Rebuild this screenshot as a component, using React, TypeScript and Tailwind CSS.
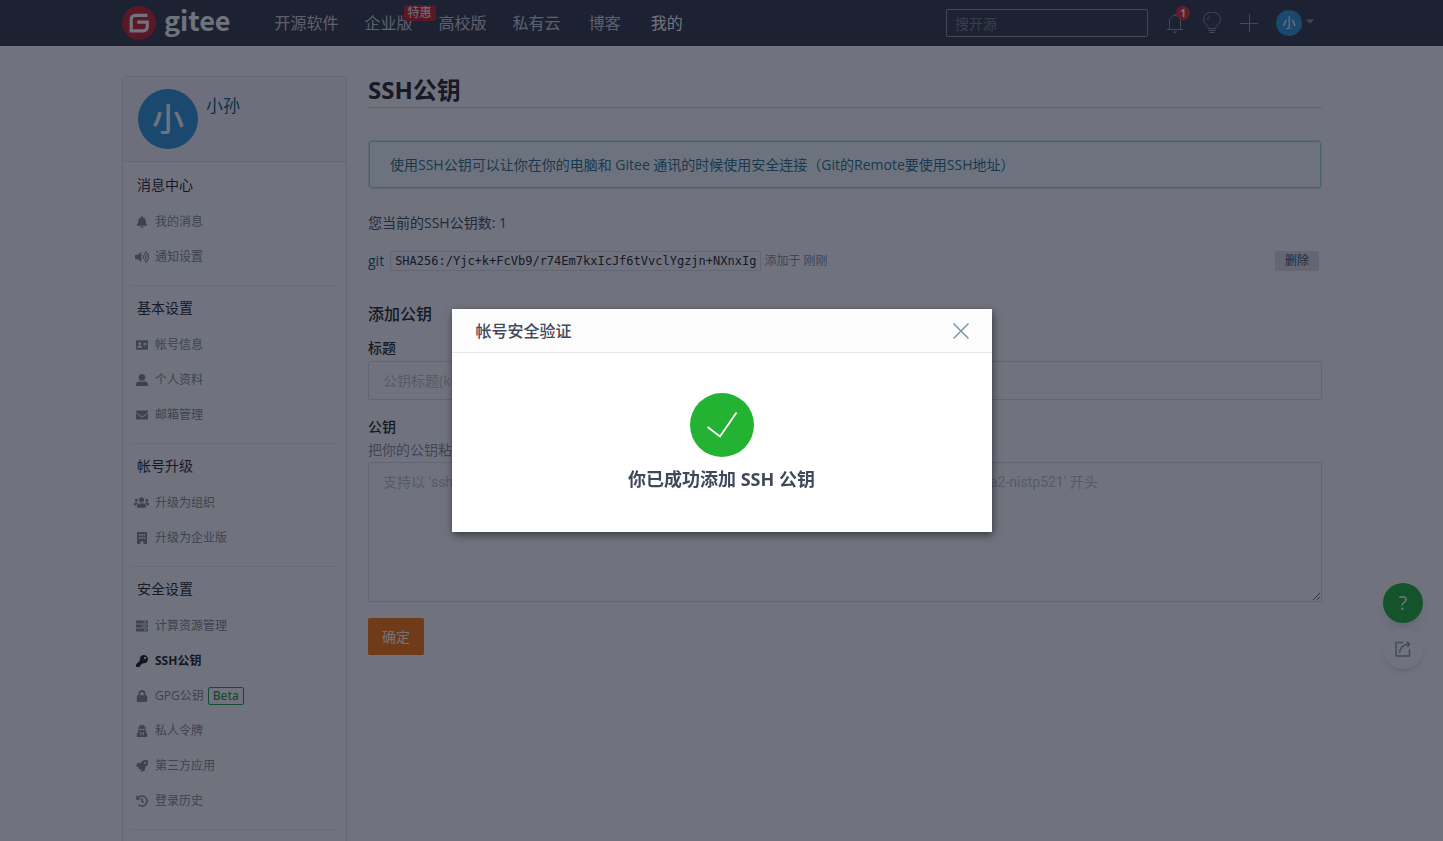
import React from 'react';
import {
    FaBell, FaVolumeUp, FaAddressCard, FaUserAlt, FaEnvelope, FaUsers,
    FaKey, FaLock, FaUserSecret, FaRocket, FaHistory, FaCaretDown,
} from 'react-icons/fa';

interface MenuItem {
    label: string;
    icon: React.ReactNode;
    active?: boolean;
    badge?: string;
}

interface MenuSection {
    title: string;
    items: MenuItem[];
}

const BuildingIcon = () => (
    <svg width="10" height="12" viewBox="0 0 10 12" fill="currentColor" fillRule="evenodd">
        <path d="M0 0h10v12H6.500V9.500h-3V12H0zM2 2v1.800h1.500V2zM4.300 2v1.800h1.500V2zM6.600 2v1.800h1.500V2zM2 5v1.800h1.500V5zM4.300 5v1.800h1.500V5zM6.600 5v1.800h1.500V5z" />
    </svg>
);

const ServerIcon = () => (
    <svg width="12" height="12" viewBox="0 0 12 12" fill="currentColor" fillRule="evenodd">
        <path d="M0 .5h12v3H0zM7.500 1.500v1h3v-1zM0 4.500h12v3H0zM6 5.500v1h4.500v-1zM0 8.500h12v3H0zM8 9.500v1h2.500v-1z" />
    </svg>
);

const sections: MenuSection[] = [
    {
        title: '消息中心',
        items: [
            { label: '我的消息', icon: <FaBell size={12} /> },
            { label: '通知设置', icon: <FaVolumeUp size={14} /> },
        ],
    },
    {
        title: '基本设置',
        items: [
            { label: '帐号信息', icon: <FaAddressCard size={12} /> },
            { label: '个人资料', icon: <FaUserAlt size={12} /> },
            { label: '邮箱管理', icon: <FaEnvelope size={12} /> },
        ],
    },
    {
        title: '帐号升级',
        items: [
            { label: '升级为组织', icon: <FaUsers size={15} /> },
            { label: '升级为企业版', icon: <BuildingIcon /> },
        ],
    },
    {
        title: '安全设置',
        items: [
            { label: '计算资源管理', icon: <ServerIcon /> },
            { label: 'SSH公钥', icon: <FaKey size={12} />, active: true },
            { label: 'GPG公钥', icon: <FaLock size={12} />, badge: 'Beta' },
            { label: '私人令牌', icon: <FaUserSecret size={12} /> },
            { label: '第三方应用', icon: <FaRocket size={12} /> },
            { label: '登录历史', icon: <FaHistory size={12} /> },
        ],
    },
];

const Logo = () => (
    <a href="#" className="flex h-full items-center gap-2 text-white">
        <svg width="34" height="34" viewBox="0 0 34 34">
            <circle cx="17" cy="17" r="17" fill="#c71d23" />
            <path
                d="M25.500 9.300H13.200a4 4 0 0 0-4 4v11.500h12.100a4 4 0 0 0 4-4v-4.700H15.300"
                fill="none"
                stroke="#fff"
                strokeWidth="3.200"
            />
        </svg>
        <span className="h-full font-['Noto_Sans_CJK_SC',sans-serif] text-[27px] leading-10 font-bold">gitee</span>
    </a>
);

const Header = () => (
    <header className="h-[46px] shrink-0 bg-[#303643]">
        <div className="mx-auto flex h-full max-w-[1201px] items-center pl-px">
            <Logo />
            <nav className="ml-11 flex items-center gap-[26px] text-base text-[#cdd0d6]">
                <a href="#">开源软件</a>
                <a href="#" className="relative">
                    企业版
                    <span className="absolute -top-1.5 left-[39px] z-10 rounded-xs bg-[#c71d23] px-1 text-xs leading-4 whitespace-nowrap text-white">特惠</span>
                </a>
                <a href="#">高校版</a>
                <a href="#">私有云</a>
                <a href="#" className="px-0.5">博客</a>
                <a href="#" className="px-0.5 text-white">我的</a>
            </nav>
            <div className="ml-auto flex items-center text-[#8c92a4]">
                <input
                    type="text"
                    aria-label="搜开源"
                    placeholder="搜开源"
                    className="h-7 w-[202px] rounded-xs border border-[#8c92a4] bg-transparent px-2 text-sm text-white outline-none placeholder:text-[#767b88]"
                />
                <button aria-label="通知" className="relative ml-[18px]">
                    <svg width="18" height="22" viewBox="0 0 18 22" fill="none" stroke="currentColor">
                        <path d="M1 17.500h16M3.500 17.500V9a5.500 5.500 0 0 1 11 0v8.500M8 3.500a1 1 0 0 1 2 0" />
                        <path d="M6.500 19.500h5L9 21.500z" fill="currentColor" stroke="none" />
                    </svg>
                    <span className="absolute -top-1.5 left-2.5 flex size-3.5 items-center justify-center rounded-full bg-[#db2828] text-[10px] font-bold text-white">1</span>
                </button>
                <button aria-label="动态" className="ml-[18px]">
                    <svg width="20" height="22" viewBox="0 0 20 22" fill="none" stroke="currentColor">
                        <path d="M6.500 16.500c0-3-5-4.500-5-9a8.500 7.500 0 0 1 17 0c0 4.500-5 6-5 9zM5.500 8A4.500 4.500 0 0 1 8 4.500M6.500 18.500h7M7.500 20.500h5" />
                    </svg>
                </button>
                <button aria-label="新建" className="ml-[18px]">
                    <svg width="18" height="18" viewBox="0 0 18 18" stroke="currentColor">
                        <path d="M9.500 0v18M0 9.500h18" />
                    </svg>
                </button>
                <button aria-label="个人菜单" className="ml-[18px] flex items-center gap-0.5 pr-1.5">
                    <span className="flex size-[26px] items-center justify-center rounded-full bg-[#2c94d6] text-[13px] text-white">小</span>
                    <FaCaretDown size={12} className="mb-1" />
                </button>
            </div>
        </div>
    </header>
);

const Sidebar = () => (
    <aside className="w-[225px] shrink-0 rounded-sm border border-[#dce0e6]">
        <div className="flex h-[85px] gap-2 border-b border-[#dfe5e9] bg-[#f8f8f9] px-[15px] pt-3">
            <div className="flex size-[60px] items-center justify-center rounded-full bg-[#2c94d6] text-[32px] font-medium text-white">小</div>
            <a href="#" className="h-8 text-[17px] leading-[34px] text-[#005980]">小孙</a>
        </div>
        {sections.map((section, i) => (
            <section key={section.title} className={i > 0 ? 'mx-1.5 border-t border-[#eceef1] pt-1 pb-[11px]' : 'mx-1.5 pt-[5px] pb-[11px]'}>
                <h2 className="mb-0.5 pl-2 text-sm leading-[35px] text-[#222]">{section.title}</h2>
                <ul>
                    {section.items.map(item => (
                        <li key={item.label}>
                            <a
                                href="#"
                                className={`flex h-[35px] items-center gap-1.5 pl-[5px] text-xs ${item.active ? 'font-bold text-[#1a1a1a]' : 'text-[#84868c]'}`}
                            >
                                <span className="flex w-[15px] justify-center">{item.icon}</span>
                                {item.label}
                                {item.badge && (
                                    <span className="-ml-0.5 rounded-xs border border-[#18a03c] px-1 font-['Noto_Sans',sans-serif] leading-4 font-medium text-[#18a03c]">{item.badge}</span>
                                )}
                            </a>
                        </li>
                    ))}
                </ul>
            </section>
        ))}
        <div className="mx-1.5 h-10 border-t border-[#eceef1]" />
    </aside>
);

const KeysPage = () => (
    <main className="min-w-0 flex-1 text-sm text-[#40485b]">
        <h1 className="h-8 border-b border-[#dededf] text-2xl leading-7 font-bold text-[#212121]">SSH公钥</h1>
        <div className="mt-8 rounded-sm border border-[#d2e4ea] bg-[#f8ffff] px-[21px] pt-[13px] pb-3 leading-[22px] text-[#276f86] inset-ring inset-ring-[#a9d5de]">
            使用SSH公钥可以让你在你的电脑和 Gitee 通讯的时候使用安全连接（Git的Remote要使用SSH地址）
        </div>
        <p className="mt-[23px] leading-[22px]">您当前的SSH公钥数: 1</p>
        <div className="mt-[17px] flex items-center pr-[3px]">
            <a href="#" className="leading-5 text-[#005980]">git</a>
            <code className="ml-1.5 border border-[#dedee4] px-1 font-['DejaVu_Sans_Mono','Liberation_Mono',monospace] text-xs leading-[18px] text-[#222]">
                SHA256:/Yjc+k+FcVb9/r74Em7kxIcJf6tVvclYgzjn+NXnxIg
            </code>
            <span className="ml-[3px] text-xs text-[#8c8c94]">添加于 刚刚</span>
            <button className="ml-auto h-5 rounded-xs bg-[#e0e1e2] px-2.5 text-xs text-[#40485b]">删除</button>
        </div>
        <form onSubmit={e => e.preventDefault()}>
            <h3 className="mt-8 text-base leading-[22px] font-medium text-[#212121]">添加公钥</h3>
            <label htmlFor="key-title" className="mt-3 mb-0.5 block leading-[22px] font-medium text-[#212121]">标题</label>
            <input
                id="key-title"
                type="text"
                placeholder="公钥标题(key title)"
                className="block h-[39px] w-full rounded-xs border border-[#dcdde0] bg-transparent px-3.5 outline-none placeholder:text-[#bfc1c8]"
            />
            <label htmlFor="key-body" className="mt-4 block leading-[22px] font-medium text-[#212121]">公钥</label>
            <p className="mb-px leading-[23px] text-[#8c8c94]">把你的公钥粘贴到这里，查看 怎样生成公钥</p>
            <textarea
                id="key-body"
                placeholder="支持以 'ssh-rsa', 'ssh-dss', 'ssh-ed25519', 'ecdsa-sha2-nistp256', 'ecdsa-sha2-nistp384' 或 'ecdsa-sha2-nistp521' 开头"
                className="block h-[140px] w-full resize-y rounded-xs border border-[#dcdde0] bg-transparent px-3.5 py-2 font-['Roboto','Noto_Sans_CJK_SC',sans-serif] leading-[22px] outline-none placeholder:text-[#bfc1c8]"
            />
            <button type="submit" className="mt-4 h-[37px] rounded-xs bg-[#fe7300] px-3.5 text-white">确定</button>
        </form>
    </main>
);

const FloatButtons = () => (
    <div className="fixed right-5 bottom-[172px] flex flex-col gap-1.5">
        <button aria-label="帮助" className="size-10 rounded-full bg-[#1bb136] text-xl text-white shadow-lg">?</button>
        <button aria-label="反馈" className="flex size-10 items-center justify-center rounded-full bg-white text-[#8c92a4] shadow-md">
            <svg width="16" height="16" viewBox="0 0 16 16" fill="none" stroke="currentColor" strokeWidth="1.400">
                <path d="M8 1.500H1v13.500h13.500V8M4.500 12C5 7 8 3.500 14 3M11.500.8 14.500 3l-2 3" />
            </svg>
        </button>
    </div>
);

const SuccessDialog = () => (
    <div className="fixed inset-0 z-30 flex items-center justify-center bg-[#101628]/60">
        <div role="dialog" aria-labelledby="dialog-title" className="w-[540px] bg-white text-[#40485b] shadow-[1px_3px_8px_rgba(0,0,0,0.5)]">
            <div className="flex h-11 items-center justify-between border-b border-[#e3e9ed] bg-[#fcfcfc] pr-[23px] pl-6">
                <h2 id="dialog-title" className="text-base font-medium">帐号安全验证</h2>
                <button aria-label="关闭" className="text-[#7c96a5]">
                    <svg width="16" height="16" viewBox="0 0 16 16" stroke="currentColor" strokeWidth="1.500">
                        <path d="M.5.5l15 15M15.500.5l-15 15" />
                    </svg>
                </button>
            </div>
            <div className="flex flex-col items-center pt-10 pb-[39px]">
                <svg width="64" height="64" viewBox="0 0 64 64">
                    <circle cx="32" cy="32" r="32" fill="#24b232" />
                    <path d="M17.500 34 30 43.500 46.500 19.500" fill="none" stroke="#fff" strokeWidth="1.800" />
                </svg>
                <p className="mt-2 text-lg leading-7 font-bold">你已成功添加 SSH 公钥</p>
            </div>
        </div>
    </div>
);

export default function App() {
    return (
        <div className="flex h-screen flex-col overflow-hidden bg-white font-['Open_Sans','Noto_Sans_CJK_SC',sans-serif]">
            <Header />
            <div className="mx-auto flex w-full max-w-[1201px] items-start gap-[21px] pt-[30px] pl-px">
                <Sidebar />
                <KeysPage />
            </div>
            <FloatButtons />
            <SuccessDialog />
        </div>
    );
}
